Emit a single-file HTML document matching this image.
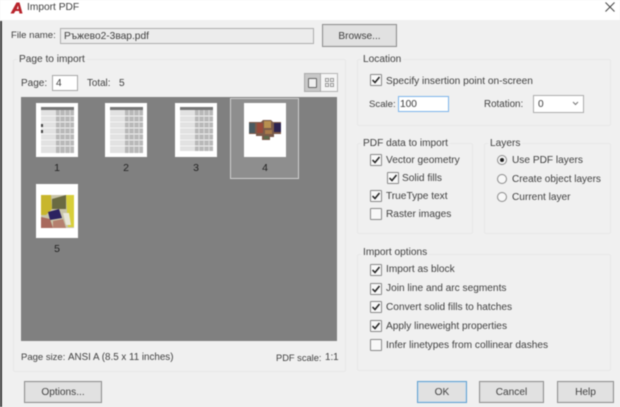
<!DOCTYPE html>
<html><head><meta charset="utf-8"><style>
html,body{margin:0;padding:0;width:620px;height:407px;overflow:hidden;background:#f0f0f0}
#r{position:relative;width:620px;height:407px;overflow:hidden;background:#f0f0f0;font-family:"Liberation Sans",sans-serif;font-size:10.15px;color:#404040;filter:blur(.45px)}
#r div,#r span.t{position:absolute;box-sizing:border-box;white-space:nowrap}
.t{line-height:14px;height:14px;margin-top:1px}
.g{border:1px solid #e8e8e8;border-radius:2px}
.l{background:#f0f0f0;padding:0 2px;line-height:12px;margin-top:1px}
.b{background:#e1e1e1;border:1px solid #8e8e8e;text-align:center;box-shadow:inset 0 0 0 1px #dcdcdc}
.c{width:12px;height:12px;background:#f8f8f8;border:1px solid #8a8a8a;border-radius:1px}
.c svg{position:absolute;left:0;top:0}
.r{width:10px;height:10px;border-radius:50%;background:#f8f8f8;border:1px solid #8a8a8a}
.p{width:42px;height:54px;background:#fff}
.n{width:42px;text-align:center;font-size:10.5px;color:#222}
.x{position:absolute}
</style></head><body><div id="r">
<div style="left:0;top:0;width:620px;height:20px;background:#fff"></div>
<div style="left:0;top:21px;width:2px;height:386px;background:#3a3a3a"></div>
<svg class="x" style="left:10px;top:2px" width="13" height="12" viewBox="0 0 13 12"><path d="M0.5 11.5L6.5 0.5H9.5L12.5 11.5H9.5L9 9H5.5L3.8 11.5ZM6.8 7H8.6L8 3.5Z" fill="#b8232b" fill-rule="evenodd"/></svg>
<span class="t" style="left:27px;top:0;font-size:10.2px">Import PDF</span>
<svg class="x" style="left:605px;top:2px" width="10" height="10" viewBox="0 0 10 10"><path d="M.5.5L9.5 9.5M9.5.5L.5 9.5" stroke="#444" stroke-width="1" fill="none"/></svg>

<span class="t" style="left:11px;top:28px;font-size:9.6px">File name:</span>
<div style="left:60px;top:28px;width:254px;height:16px;background:#ececec;border:1px solid #aeaeae;padding-left:3px;line-height:15px;font-size:10.2px;font-family:'Liberation Sans','DejaVu Sans',sans-serif">Ръжево2-3вар.pdf</div>
<div class="b" style="left:322px;top:24px;width:75px;height:23px;line-height:23px">Browse...</div>

<div class="g" style="left:13px;top:59px;width:333px;height:313px"></div>
<div class="l" style="left:17px;top:53px">Page to import</div>
<span class="t" style="left:21px;top:76px;font-size:10px">Page:</span>
<div style="left:52px;top:75px;width:26px;height:16px;background:#fff;border:1px solid #a8a8a8;padding-left:3px;line-height:15px">4</div>
<span class="t" style="left:87px;top:76px;font-size:9.8px">Total:</span>
<span class="t" style="left:119px;top:76px">5</span>
<div style="left:304px;top:73px;width:34px;height:19px;background:#f5f5f5;border:1px solid #b5b5b5"></div>
<div style="left:304px;top:73px;width:17px;height:19px;background:#c8c8c8;border:1px solid #aaa"></div>
<div style="left:308px;top:78px;width:9px;height:10px;border:1px solid #666;border-radius:1px;background:#f0f0f0"></div>
<div style="left:325px;top:78px;width:4px;height:4px;border:1px solid #999"></div>
<div style="left:330px;top:78px;width:4px;height:4px;border:1px solid #999"></div>
<div style="left:325px;top:83px;width:4px;height:4px;border:1px solid #999"></div>
<div style="left:330px;top:83px;width:4px;height:4px;border:1px solid #999"></div>

<div style="left:21px;top:97px;width:316px;height:244px;background:#808080"></div>
<div style="left:230px;top:98px;width:69px;height:81px;background:#8e8e8e;border:1px solid #cfcfcf"></div>

<div class="p" style="left:36px;top:103px"></div>
<svg class="x" style="left:41px;top:107px" width="33" height="46" viewBox="0 0 33 46"><rect width="33" height="3" fill="#777"/><rect y="3" width="15" height="43" fill="#e2e2e2"/><rect x="15" y="3" width="18" height="43" fill="#b8b8b8"/><path d="M0 9H33M0 15H33M0 21H33M0 27H33M0 33H33M0 39H33" stroke="#f3f3f3" stroke-width="1"/><path d="M19 3V46M24 3V46M29 3V46" stroke="#ddd" stroke-width="1"/><rect y="17" width="2" height="3" fill="#444"/><rect y="23" width="2" height="3" fill="#444"/></svg>
<div class="p" style="left:105px;top:103px"></div>
<svg class="x" style="left:110px;top:107px" width="33" height="46" viewBox="0 0 33 46"><rect width="33" height="3" fill="#777"/><rect y="3" width="15" height="43" fill="#e2e2e2"/><rect x="15" y="3" width="18" height="43" fill="#b8b8b8"/><path d="M0 9H33M0 15H33M0 21H33M0 27H33M0 33H33M0 39H33" stroke="#f3f3f3" stroke-width="1"/><path d="M19 3V46M24 3V46M29 3V46" stroke="#ddd" stroke-width="1"/></svg>
<div class="p" style="left:175px;top:103px"></div>
<svg class="x" style="left:180px;top:107px" width="33" height="44" viewBox="0 0 33 44"><rect width="33" height="3" fill="#777"/><rect y="3" width="15" height="41" fill="#e2e2e2"/><rect x="15" y="3" width="18" height="41" fill="#b8b8b8"/><path d="M0 9H33M0 15H33M0 21H33M0 27H33M0 33H33M0 39H33" stroke="#f3f3f3" stroke-width="1"/><path d="M19 3V44M24 3V44M29 3V44" stroke="#ddd" stroke-width="1"/></svg>
<div class="p" style="left:244px;top:103px"></div>
<svg class="x" style="left:248px;top:119px" width="34" height="24" viewBox="0 0 34 24"><path d="M1 3H13L15 1H23L25 3H33V15H26V18H22V21H14V17H8V15H1Z" fill="#7a5a4a"/><rect x="1" y="4" width="6" height="10" fill="#4a5a60"/><rect x="9" y="4" width="6" height="10" fill="#9a4a3a"/><rect x="16" y="2" width="7" height="7" fill="#b89050"/><rect x="26" y="4" width="7" height="9" fill="#2c2450"/><rect x="17" y="11" width="7" height="4" fill="#a87a4a"/><rect x="16" y="17" width="5" height="3" fill="#5a6a4a"/></svg>
<div class="p" style="left:36px;top:184px"></div>
<svg class="x" style="left:41px;top:195px" width="33" height="33" viewBox="0 0 33 33"><rect width="33" height="33" fill="#c8c4a8"/><path d="M0 0H10L11 14L5 20H0Z" fill="#c8b62c"/><path d="M11 4L25 0V14H11Z" fill="#6a6a42"/><path d="M25 0H33V32H27Z" fill="#d8cf3a"/><path d="M7 17L18 14L21 23L9 25Z" fill="#2c2260"/><path d="M0 22L9 24L12 33H0Z" fill="#a8695c"/><path d="M12 26L22 24L25 33H12Z" fill="#b5806e"/><path d="M22 18L28 18L30 30L25 30Z" fill="#e8e6d8"/></svg>
<span class="t n" style="left:36px;top:160px">1</span>
<span class="t n" style="left:105px;top:160px">2</span>
<span class="t n" style="left:175px;top:160px">3</span>
<span class="t n" style="left:244px;top:160px">4</span>
<span class="t n" style="left:36px;top:241px">5</span>

<span class="t" style="left:21px;top:350px;font-size:9.5px">Page size:</span>
<span class="t" style="left:68px;top:350px;font-size:9.8px">ANSI A (8.5 x 11 inches)</span>
<span class="t" style="left:276px;top:350px;font-size:9.3px">PDF scale:</span>
<span class="t" style="left:325px;top:350px;font-size:9.8px">1:1</span>
<div class="b" style="left:24px;top:381px;width:78px;height:22px;line-height:22px">Options...</div>

<div class="g" style="left:357px;top:59px;width:254px;height:67px"></div>
<div class="l" style="left:361px;top:53px">Location</div>
<div class="c" style="left:370px;top:74px"><svg width="10" height="10" viewBox="0 0 10 10"><path d="M1.5 5L4 7.5L8.5 2" stroke="#222" stroke-width="1.5" fill="none"/></svg></div>
<span class="t" style="left:386px;top:74px">Specify insertion point on-screen</span>
<span class="t" style="left:369px;top:97px;font-size:9.6px">Scale:</span>
<div style="left:398px;top:96px;width:51px;height:16px;background:#fff;border:1px solid #7eb4ea;padding-left:1px;line-height:15px">100</div>
<span class="t" style="left:484px;top:97px;font-size:9.8px">Rotation:</span>
<div style="left:533px;top:95px;width:51px;height:18px;background:#fff;border:1px solid #adadad;padding-left:4px;line-height:17px">0</div>
<svg class="x" style="left:572px;top:101px" width="7" height="5" viewBox="0 0 7 5"><path d="M1 1L3.5 3.5L6 1" stroke="#777" fill="none"/></svg>

<div class="g" style="left:357px;top:143px;width:116px;height:91px"></div>
<div class="l" style="left:361px;top:137px">PDF data to import</div>
<div class="c" style="left:370px;top:154px"><svg width="10" height="10" viewBox="0 0 10 10"><path d="M1.5 5L4 7.5L8.5 2" stroke="#222" stroke-width="1.5" fill="none"/></svg></div>
<span class="t" style="left:386px;top:153px">Vector geometry</span>
<div class="c" style="left:387px;top:172px"><svg width="10" height="10" viewBox="0 0 10 10"><path d="M1.5 5L4 7.5L8.5 2" stroke="#222" stroke-width="1.5" fill="none"/></svg></div>
<span class="t" style="left:402px;top:171px">Solid fills</span>
<div class="c" style="left:370px;top:190px"><svg width="10" height="10" viewBox="0 0 10 10"><path d="M1.5 5L4 7.5L8.5 2" stroke="#222" stroke-width="1.5" fill="none"/></svg></div>
<span class="t" style="left:386px;top:189px">TrueType text</span>
<div class="c" style="left:370px;top:208px"></div>
<span class="t" style="left:386px;top:207px">Raster images</span>

<div class="g" style="left:484px;top:143px;width:127px;height:91px"></div>
<div class="l" style="left:488px;top:137px">Layers</div>
<div class="r" style="left:497px;top:155px"></div><div style="left:500px;top:158px;width:4px;height:4px;border-radius:50%;background:#222"></div>
<span class="t" style="left:512px;top:153px">Use PDF layers</span>
<div class="r" style="left:497px;top:174px"></div>
<span class="t" style="left:512px;top:172px;font-size:10px">Create object layers</span>
<div class="r" style="left:497px;top:192px"></div>
<span class="t" style="left:512px;top:190px">Current layer</span>

<div class="g" style="left:357px;top:254px;width:254px;height:117px"></div>
<div class="l" style="left:361px;top:246px">Import options</div>
<div class="c" style="left:370px;top:264px"><svg width="10" height="10" viewBox="0 0 10 10"><path d="M1.5 5L4 7.5L8.5 2" stroke="#222" stroke-width="1.5" fill="none"/></svg></div>
<span class="t" style="left:386px;top:262px">Import as block</span>
<div class="c" style="left:370px;top:283px"><svg width="10" height="10" viewBox="0 0 10 10"><path d="M1.5 5L4 7.5L8.5 2" stroke="#222" stroke-width="1.5" fill="none"/></svg></div>
<span class="t" style="left:386px;top:281px">Join line and arc segments</span>
<div class="c" style="left:370px;top:301px"><svg width="10" height="10" viewBox="0 0 10 10"><path d="M1.5 5L4 7.5L8.5 2" stroke="#222" stroke-width="1.5" fill="none"/></svg></div>
<span class="t" style="left:386px;top:300px">Convert solid fills to hatches</span>
<div class="c" style="left:370px;top:320px"><svg width="10" height="10" viewBox="0 0 10 10"><path d="M1.5 5L4 7.5L8.5 2" stroke="#222" stroke-width="1.5" fill="none"/></svg></div>
<span class="t" style="left:386px;top:319px">Apply lineweight properties</span>
<div class="c" style="left:370px;top:339px"></div>
<span class="t" style="left:386px;top:338px">Infer linetypes from collinear dashes</span>

<div class="b" style="left:417px;top:381px;width:50px;height:22px;line-height:22px;border-color:#5f9fcf;box-shadow:inset 0 0 0 1px #cfe0ec">OK</div>
<div class="b" style="left:479px;top:381px;width:65px;height:22px;line-height:22px">Cancel</div>
<div class="b" style="left:557px;top:381px;width:57px;height:22px;line-height:22px">Help</div>
</div></body></html>
